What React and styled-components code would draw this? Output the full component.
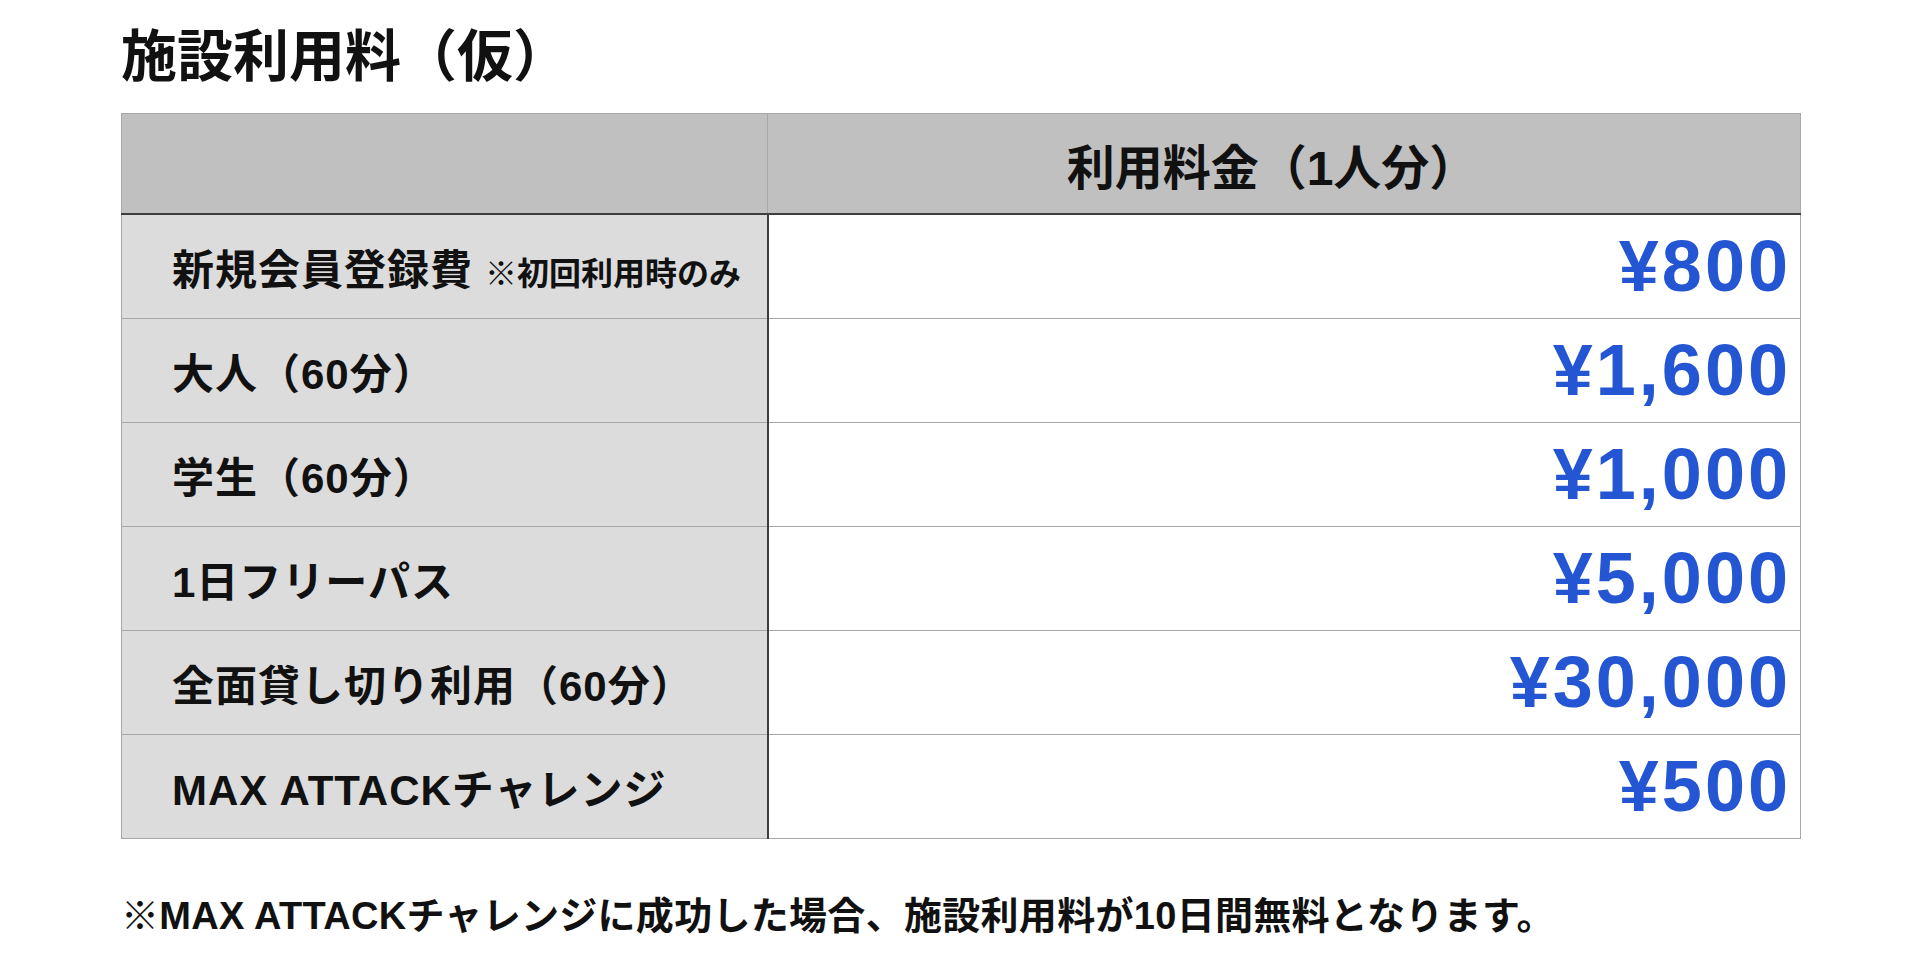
import React from "react";
import styled, { createGlobalStyle } from "styled-components";

const GlobalStyle = createGlobalStyle`
  html, body {
    margin: 0;
    padding: 0;
    background: #ffffff;
  }
  body {
    font-family: "Liberation Sans", "Noto Sans CJK JP", sans-serif;
    color: #111111;
  }
`;

const Page = styled.div`
  padding: 24px 0 0 121px;
  width: 1680px;
`;

const Title = styled.h1`
  margin: 0 0 33px;
  font-family: "Noto Sans CJK JP", sans-serif;
  font-size: 56px;
  line-height: 56px;
  font-weight: 700;
`;

const PriceTable = styled.table`
  width: 1680px;
  border-collapse: collapse;
  table-layout: fixed;
  border: 1px solid #a8a8a8;
`;

const HeadCell = styled.th`
  height: 99px;
  padding: 0 ${(p) => p.$shift || 0}px 0 0;
  background: #bfc0bf;
  border-left: 1px solid #a8a8a8;
  border-bottom: 2px solid #3e3e3e;
  font-size: 48px;
  font-weight: 700;
  text-align: center;
  vertical-align: middle;
  &:first-child {
    width: 645px;
    border-left: none;
  }
`;

const Row = styled.tr`
  height: 104px;
  & + & td {
    border-top: 1px solid #a8a8a8;
  }
`;

const LabelCell = styled.td`
  padding: 0 0 0 50px;
  background: #dcdcdc;
  border-right: 2px solid #3e3e3e;
  font-size: 42px;
  font-weight: 700;
  letter-spacing: 1px;
  white-space: nowrap;
  vertical-align: middle;
`;

const Note = styled.span`
  margin-left: 12px;
  font-size: 32px;
  letter-spacing: 0;
`;

const PriceCell = styled.td`
  padding: 0 9px 0 0;
  background: #ffffff;
  text-align: right;
  vertical-align: middle;
  font-family: "Liberation Sans", Arial, sans-serif;
  font-size: 72px;
  font-weight: 700;
  letter-spacing: 3px;
  color: #2456d3;
`;

const Footnote = styled.p`
  margin: 58px 0 0;
  font-size: 38px;
  line-height: 38px;
  font-weight: 700;
  letter-spacing: 0.3px;
`;

const rows = [
  { label: "新規会員登録費", note: "※初回利用時のみ", price: "¥800" },
  { label: "大人（60分）", price: "¥1,600" },
  { label: "学生（60分）", price: "¥1,000" },
  { label: "1日フリーパス", price: "¥5,000" },
  { label: "全面貸し切り利用（60分）", price: "¥30,000" },
  { label: "MAX ATTACKチャレンジ", price: "¥500" },
];

export default function App() {
  return (
    <>
      <GlobalStyle />
      <Page>
        <Title>施設利用料（仮）</Title>
        <PriceTable>
          <thead>
            <tr>
              <HeadCell />
              <HeadCell $shift={24}>利用料金（1人分）</HeadCell>
            </tr>
          </thead>
          <tbody>
            {rows.map((r) => (
              <Row key={r.label}>
                <LabelCell>
                  {r.label}
                  {r.note && <Note>{r.note}</Note>}
                </LabelCell>
                <PriceCell>{r.price}</PriceCell>
              </Row>
            ))}
          </tbody>
        </PriceTable>
        <Footnote>
          ※MAX ATTACKチャレンジに成功した場合、施設利用料が10日間無料となります。
        </Footnote>
      </Page>
    </>
  );
}
